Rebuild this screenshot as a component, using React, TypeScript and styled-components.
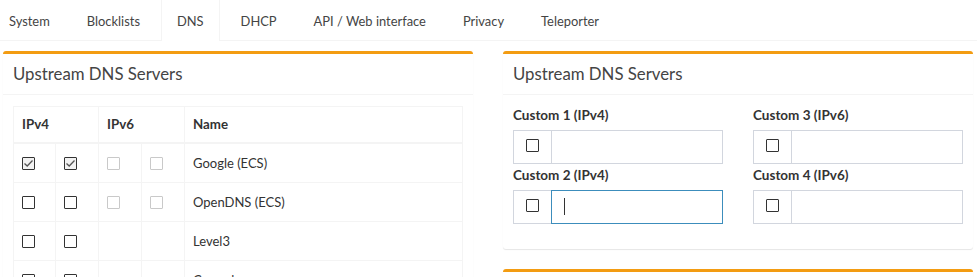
import React from "react";
import styled, { createGlobalStyle, css } from "styled-components";

const GlobalStyle = createGlobalStyle`
  html { overflow: hidden; }
  body {
    margin: 0;
    background: #ffffff;
    font-family: Lato, "Open Sans", sans-serif;
    font-size: 13px;
    line-height: 20px;
    color: #333333;
  }
  * { box-sizing: border-box; }
`;

const Page = styled.div`
  width: 977px;
`;

const TabList = styled.ul`
  list-style: none;
  margin: 0 0 0 -7px;
  padding: 0;
  display: flex;
  border-bottom: 1px solid #f4f4f4;
`;

const TabItem = styled.li`
  margin-right: 5px;
`;

const TabLink = styled.a<{ $active?: boolean }>`
  display: block;
  padding: 11px 15px 9px;
  font-size: 12.9px;
  border: 1px solid transparent;
  border-top: 0;
  border-bottom: 0;
  color: #444444;
  text-decoration: none;
  cursor: pointer;
  ${(p) =>
    p.$active &&
    css`
      border-left-color: #f4f4f4;
      border-right-color: #f4f4f4;
      background: #ffffff;
      margin-bottom: -1px;
      padding-bottom: 10px;
    `}
`;

const Columns = styled.div`
  display: grid;
  grid-template-columns: 470px 470px;
  column-gap: 30px;
  padding: 10px 0 0 3px;
  align-items: start;
`;

const Stack = styled.div`
  display: flex;
  flex-direction: column;
  gap: 20px;
`;

const Box = styled.section`
  background: #ffffff;
  border-radius: 3px;
  border-top: 3px solid #f39c12;
  box-shadow: 0 1px 1px rgba(0, 0, 0, 0.1);
`;

const BoxHeader = styled.div`
  padding: 10px;
  border-bottom: 1px solid #f4f4f4;
`;

const BoxTitle = styled.h3`
  margin: 0;
  font-size: 16.8px;
  font-weight: 400;
  line-height: 20px;
  color: #444444;
`;

const BoxBody = styled.div`
  padding: 10px;
`;

const Table = styled.table`
  width: 100%;
  border-collapse: collapse;
  border: 1px solid #f4f4f4;
  margin-top: 1px;
`;

const Th = styled.th`
  text-align: left;
  font-weight: 700;
  font-size: 13.3px;
  padding: 8px;
  line-height: 19px;
  border: 1px solid #f4f4f4;
  border-bottom-width: 2px;
`;

const Td = styled.td`
  padding: 8px;
  line-height: 22px;
  border: 1px solid #f4f4f4;
  vertical-align: middle;
`;

const CheckCell = styled(Td)`
  line-height: 0;
`;

const Box13 = styled.span<{ $disabled?: boolean; $checked?: boolean }>`
  display: inline-block;
  width: 13px;
  height: 13px;
  border: 1px solid ${(p) => (p.$disabled ? "#c9c9c9" : "#333333")};
  background: ${(p) => (p.$checked ? "#f2f2f2" : "#ffffff")};
  border-radius: 1px;
  vertical-align: middle;
  position: relative;
`;

const CheckMark = styled.svg`
  position: absolute;
  left: 0;
  top: 0;
`;

function Checkbox({ checked, disabled }: { checked?: boolean; disabled?: boolean }) {
  return (
    <Box13 $checked={checked} $disabled={disabled}>
      {checked && (
        <CheckMark width="11" height="11" viewBox="0 0 11 11">
          <polyline points="1.5,5.5 4.2,8 9.5,2.5" fill="none" stroke="#555555" strokeWidth="1.3" />
        </CheckMark>
      )}
    </Box13>
  );
}

const FormGrid = styled.div`
  display: grid;
  grid-template-columns: minmax(0, 1fr) minmax(0, 1fr);
  column-gap: 30px;
  row-gap: 1px;
  padding-bottom: 15px;
`;

const FormGroup = styled.div`
  display: flex;
  flex-direction: column;
  min-width: 0;
`;

const Label = styled.label`
  font-weight: 700;
  font-size: 13.5px;
  line-height: 20px;
  margin-bottom: 5px;
  color: #333333;
`;

const InputGroup = styled.div`
  display: flex;
  height: 34px;
`;

const Addon = styled.span`
  width: 38px;
  flex: none;
  border: 1px solid #d2d6de;
  border-right: 0;
  display: flex;
  align-items: center;
  justify-content: center;
  padding-bottom: 3px;
  background: #ffffff;
`;

const InputWrap = styled.div`
  position: relative;
  flex: 1;
  min-width: 0;
  display: flex;
`;

const TextInput = styled.input<{ $focused?: boolean }>`
  width: 100%;
  min-width: 0;
  height: 34px;
  border: 1px solid ${(p) => (p.$focused ? "#3c8dbc" : "#d2d6de")};
  padding: 6px 12px;
  font: inherit;
  color: #555555;
  outline: none;
  background: #ffffff;
`;

const Caret = styled.span`
  position: absolute;
  left: 13px;
  top: 8px;
  width: 1px;
  height: 17px;
  background: #333333;
`;

const tabs = ["System", "Blocklists", "DNS", "DHCP", "API / Web interface", "Privacy", "Teleporter"];

type Row = { name: string; v4: "checked" | "unchecked"; v6: "disabled" | "none" | "unchecked" };
const rows: Row[] = [
  { name: "Google (ECS)", v4: "checked", v6: "disabled" },
  { name: "OpenDNS (ECS)", v4: "unchecked", v6: "disabled" },
  { name: "Level3", v4: "unchecked", v6: "none" },
  { name: "Comodo", v4: "unchecked", v6: "none" },
  { name: "DNS.WATCH", v4: "unchecked", v6: "unchecked" },
  { name: "Quad9 (filtered, DNSSEC)", v4: "unchecked", v6: "unchecked" },
];

const customs = [
  { label: "Custom 1 (IPv4)", focused: false },
  { label: "Custom 3 (IPv6)", focused: false },
  { label: "Custom 2 (IPv4)", focused: true },
  { label: "Custom 4 (IPv6)", focused: false },
];

export default function App() {
  return (
    <Page>
      <GlobalStyle />
      <TabList>
        {tabs.map((t) => (
          <TabItem key={t}>
            <TabLink $active={t === "DNS"}>{t}</TabLink>
          </TabItem>
        ))}
      </TabList>
      <Columns>
        <Box>
          <BoxHeader>
            <BoxTitle>Upstream DNS Servers</BoxTitle>
          </BoxHeader>
          <BoxBody>
            <Table>
              <colgroup>
                <col style={{ width: 42 }} />
                <col style={{ width: 43 }} />
                <col style={{ width: 43 }} />
                <col style={{ width: 43 }} />
                <col />
              </colgroup>
              <thead>
                <tr>
                  <Th colSpan={2}>IPv4</Th>
                  <Th colSpan={2}>IPv6</Th>
                  <Th>Name</Th>
                </tr>
              </thead>
              <tbody>
                {rows.map((r) => (
                  <tr key={r.name}>
                    <CheckCell><Checkbox checked={r.v4 === "checked"} /></CheckCell>
                    <CheckCell><Checkbox checked={r.v4 === "checked"} /></CheckCell>
                    <CheckCell>{r.v6 !== "none" && <Checkbox disabled={r.v6 === "disabled"} />}</CheckCell>
                    <CheckCell>{r.v6 !== "none" && <Checkbox disabled={r.v6 === "disabled"} />}</CheckCell>
                    <Td>{r.name}</Td>
                  </tr>
                ))}
              </tbody>
            </Table>
          </BoxBody>
        </Box>
        <Stack>
          <Box>
            <BoxHeader>
              <BoxTitle>Upstream DNS Servers</BoxTitle>
            </BoxHeader>
            <BoxBody>
              <FormGrid>
                {customs.map((c) => (
                  <FormGroup key={c.label}>
                    <Label>{c.label}</Label>
                    <InputGroup>
                      <Addon>
                        <Checkbox />
                      </Addon>
                      <InputWrap>
                        <TextInput $focused={c.focused} />
                        {c.focused && <Caret />}
                      </InputWrap>
                    </InputGroup>
                  </FormGroup>
                ))}
              </FormGrid>
            </BoxBody>
          </Box>
          <Box>
            <BoxHeader>
              <BoxTitle>Interface settings</BoxTitle>
            </BoxHeader>
            <BoxBody>Listening behavior</BoxBody>
          </Box>
        </Stack>
      </Columns>
    </Page>
  );
}
